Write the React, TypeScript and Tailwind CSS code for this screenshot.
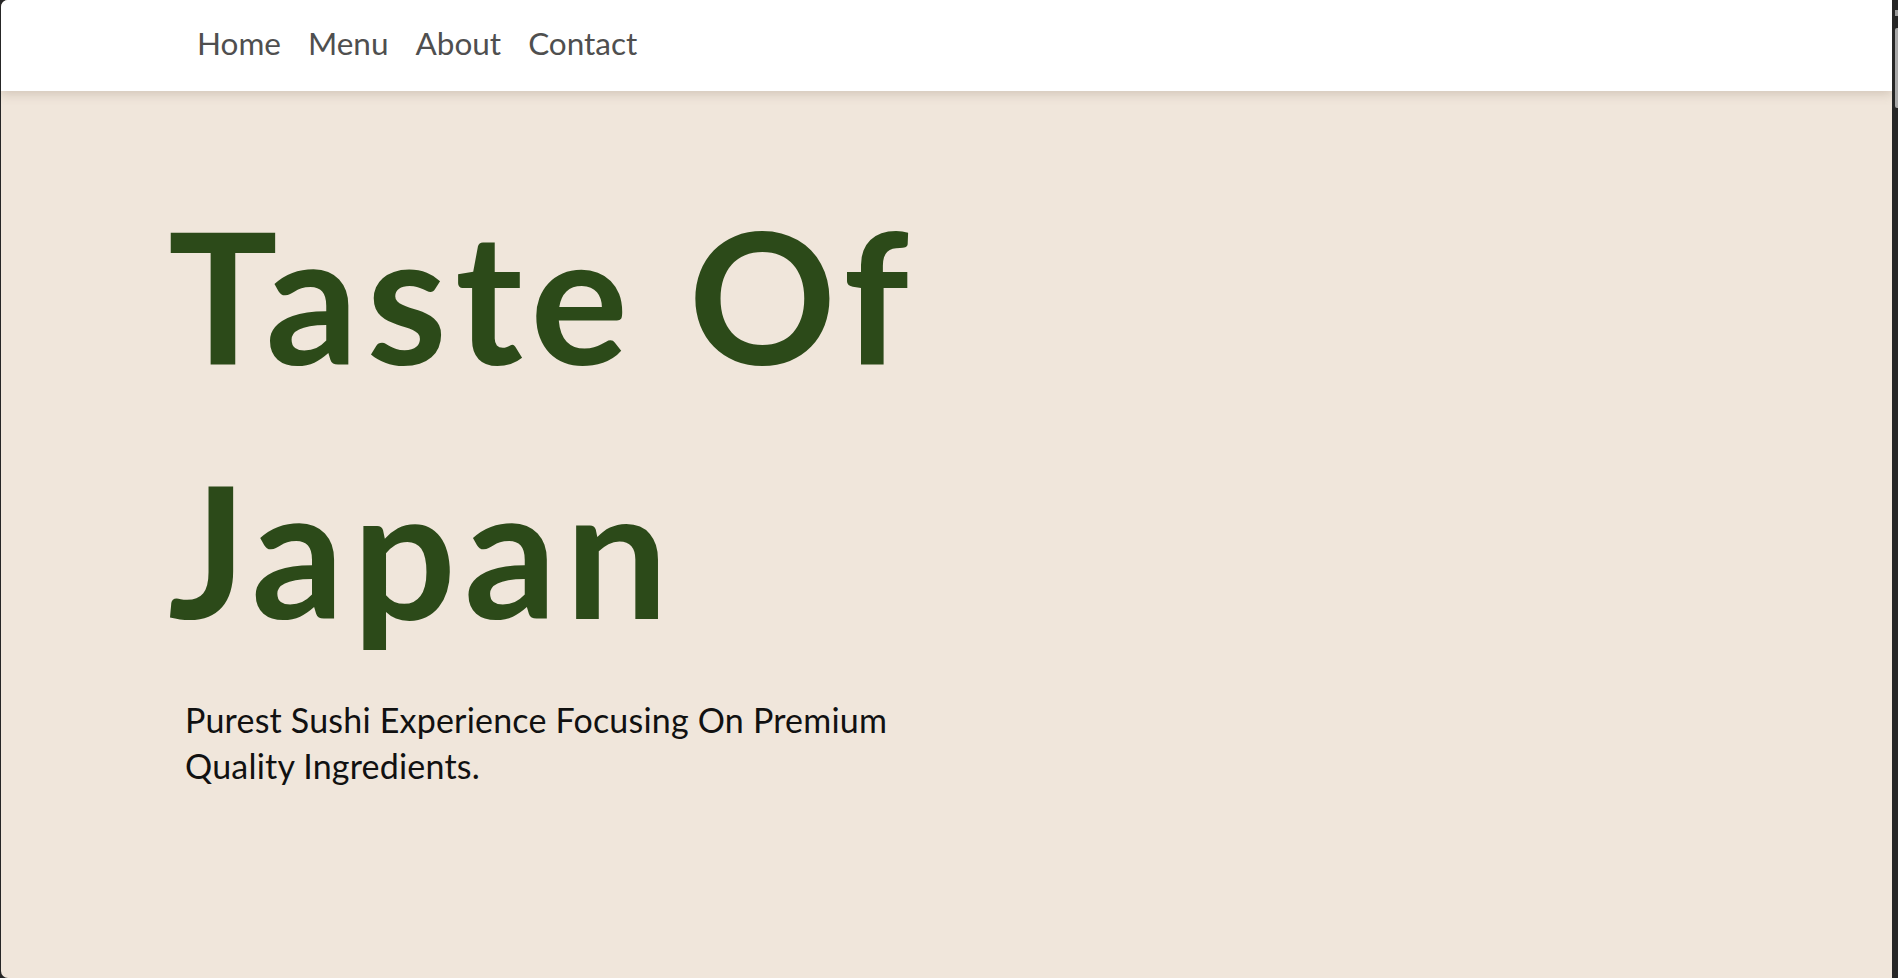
import React from "react";

export default function App() {
  const links = ["Home", "Menu", "About", "Contact"];
  return (
    <div className="flex h-[978px] w-[1898px] overflow-hidden bg-[#262626]">
      <div className="ml-[1px] flex w-[1891px] flex-col overflow-hidden rounded-l-[7px] bg-[#f0e6db]">
        <nav className="relative z-10 flex h-[91px] shrink-0 items-center bg-white pl-[196px] shadow-[0_3px_10px_rgba(120,100,80,0.25)]">
          <ul className="flex gap-[27px] pb-[4px]" style={{ fontFamily: "Lato, 'Open Sans', sans-serif" }}>
            {links.map((l) => (
              <li key={l} className="text-[31.5px] leading-none text-[#4f4f4f]">
                {l}
              </li>
            ))}
          </ul>
        </nav>
        <main className="flex-1 pl-[167px] pt-[76px]" style={{ fontFamily: "Lato, 'Open Sans', sans-serif" }}>
          <h1 className="w-[840px] text-[183px] font-bold leading-[254px] tracking-[8px] text-[#2c4a19]">
            Taste Of Japan
          </h1>
          <p className="mt-[22px] ml-[17px] w-[740px] text-[34px] leading-[46px] tracking-[0.2px] text-[#111111]">
            Purest Sushi Experience Focusing On Premium Quality Ingredients.
          </p>
        </main>
      </div>
      <div className="flex w-[6px] flex-col items-end bg-[#262626] pt-[10px]">
        <div className="h-[6px] w-[3px] bg-[#9a9a9a]" />
        <div className="mt-[12px] h-[80px] w-[3px] rounded-l-[2px] bg-[#a8a8a8]" />
      </div>
    </div>
  );
}
